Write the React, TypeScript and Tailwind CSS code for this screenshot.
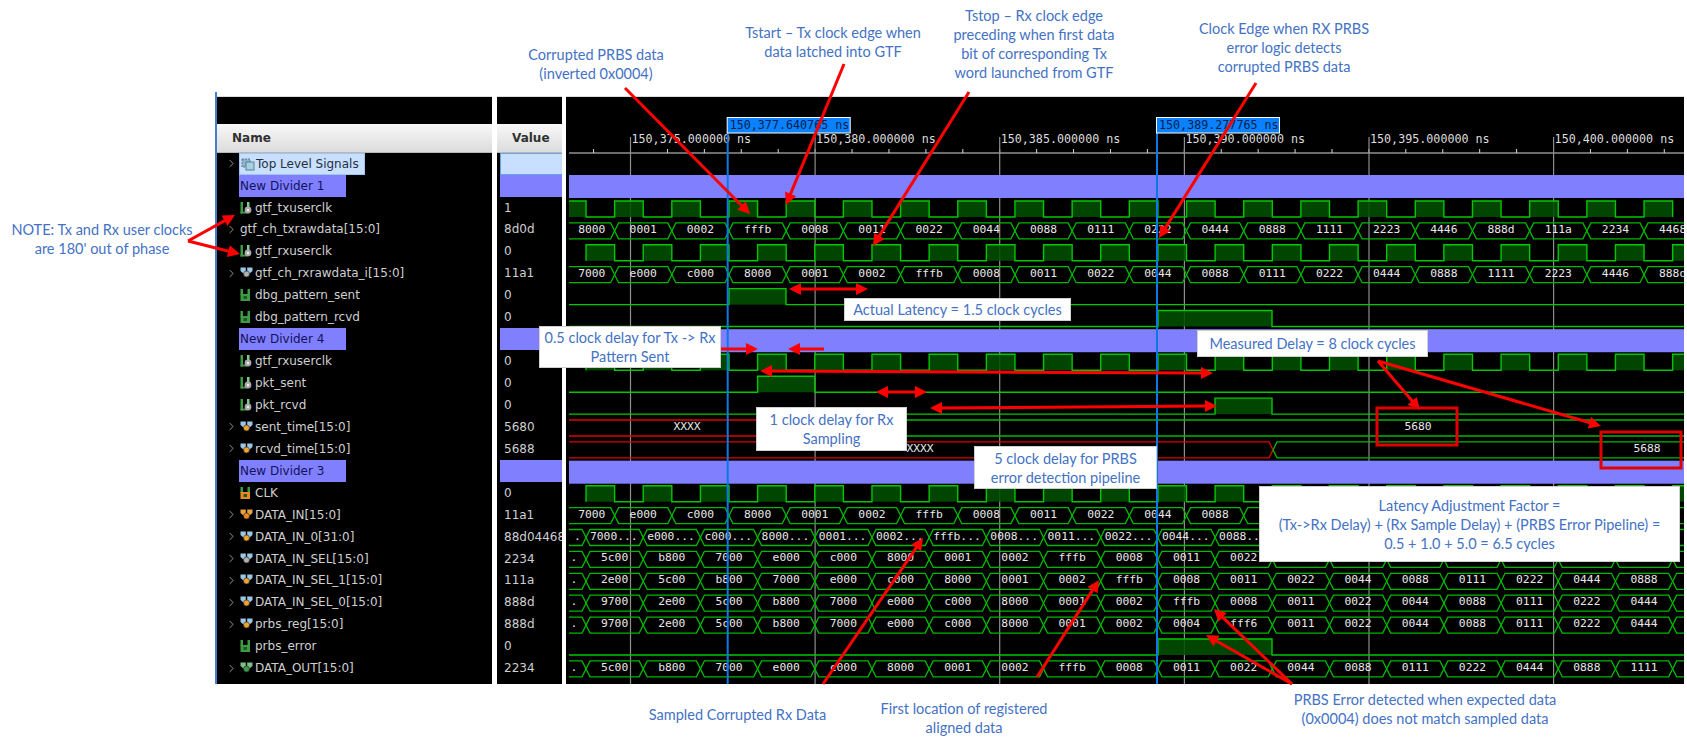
import React from "react";
import { ChevronRight } from "lucide-react";

const P = 57.19;
const T0 = 729;
const L = 569;
const R = 1684;
const rowY = (i: number) => 201 + (i - 2) * 21.9;
const GREEN = "#00c800";
const MONO = "'DejaVu Sans Mono', monospace";

type Ic = { k: "s" | "b" | "g"; top?: string; dot?: string } | null;
type Row = { n: string; v: string; exp?: boolean; ic?: Ic; div?: boolean; group?: boolean };

const S = (dot = "#a8a8a8", top = "#3f9a45"): Ic => ({ k: "s", dot, top });
const G = (bottom = "#3f9a45"): Ic => ({ k: "g", dot: bottom, top: "#3f9a45" });
const B = (dot = "#f2a230", top = "#9cc8e6"): Ic => ({ k: "b", dot, top });

const rows: Row[] = [
  { n: "Top Level Signals", v: "", exp: true, group: true },
  { n: "New Divider 1", v: "", div: true },
  { n: "gtf_txuserclk", v: "1", ic: S() },
  { n: "gtf_ch_txrawdata[15:0]", v: "8d0d", exp: true },
  { n: "gtf_rxuserclk", v: "0", ic: S() },
  { n: "gtf_ch_rxrawdata_i[15:0]", v: "11a1", exp: true, ic: B("#b0b0b0") },
  { n: "dbg_pattern_sent", v: "0", ic: G() },
  { n: "dbg_pattern_rcvd", v: "0", ic: G() },
  { n: "New Divider 4", v: "", div: true },
  { n: "gtf_rxuserclk", v: "0", ic: S() },
  { n: "pkt_sent", v: "0", ic: S() },
  { n: "pkt_rcvd", v: "0", ic: S() },
  { n: "sent_time[15:0]", v: "5680", exp: true, ic: B() },
  { n: "rcvd_time[15:0]", v: "5688", exp: true, ic: B() },
  { n: "New Divider 3", v: "", div: true },
  { n: "CLK", v: "0", ic: G("#e88a20") },
  { n: "DATA_IN[15:0]", v: "11a1", exp: true, ic: B("#e88a20", "#e8a040") },
  { n: "DATA_IN_0[31:0]", v: "88d04468", exp: true, ic: B() },
  { n: "DATA_IN_SEL[15:0]", v: "2234", exp: true, ic: B("#b0b0b0") },
  { n: "DATA_IN_SEL_1[15:0]", v: "111a", exp: true, ic: B() },
  { n: "DATA_IN_SEL_0[15:0]", v: "888d", exp: true, ic: B() },
  { n: "prbs_reg[15:0]", v: "888d", exp: true, ic: B() },
  { n: "prbs_error", v: "0", ic: G() },
  { n: "DATA_OUT[15:0]", v: "2234", exp: true, ic: B("#3f9a45", "#7fc08a") },
];

function SigIcon({ ic }: { ic: Ic }) {
  if (!ic) return null;
  if (ic.k === "s") {
    return (
      <svg width="13" height="14" viewBox="0 0 13 14" className="shrink-0">
        <rect x="0.5" y="1" width="2.5" height="11.5" fill={ic.top} />
        <rect x="0.5" y="10.5" width="7" height="2" fill={ic.top} />
        <rect x="7" y="1" width="2.5" height="5" fill="#7fc98a" />
        <circle cx="8" cy="9" r="3.4" fill={ic.dot} />
        <circle cx="8" cy="9" r="1.2" fill="#f0f0f0" />
      </svg>
    );
  }
  if (ic.k === "g") {
    return (
      <svg width="13" height="14" viewBox="0 0 13 14" className="shrink-0">
        <rect x="0.5" y="1" width="2.5" height="6" fill={ic.top} />
        <rect x="7.5" y="1" width="2.5" height="6" fill={ic.top} />
        <rect x="0.5" y="6" width="9.5" height="7" fill={ic.dot} />
        <rect x="3.5" y="8" width="3.5" height="3" fill="#1f5a25" />
      </svg>
    );
  }
  return (
    <svg width="13" height="14" viewBox="0 0 13 14" className="shrink-0">
      <path d="M0.5 1.5h5.3v4.5L4 8 0.5 5z" fill={ic.top} />
      <path d="M12.5 1.5H7.2V6L9 8l3.5-3z" fill={ic.top} />
      <circle cx="6.5" cy="8" r="3" fill={ic.dot} stroke="#222" strokeWidth="0.6" />
    </svg>
  );
}

function GroupIcon() {
  return (
    <svg width="14" height="14" viewBox="0 0 14 14" className="shrink-0">
      <rect x="1" y="2" width="8" height="8" fill="#8fb4c8" stroke="#5a7f95" strokeDasharray="2 1" />
      <rect x="5" y="5" width="8" height="8" fill="#a8d0e0" stroke="#5a7f95" />
    </svg>
  );
}

function Clock({ i, phase }: { i: number; phase: number }) {
  const hi = rowY(i);
  const lo = hi + 16;
  let d = "";
  const fills: React.ReactNode[] = [];
  let start = phase;
  while (start > L) start -= P;
  let x = start;
  let first = true;
  while (x < R) {
    const a = Math.max(x, L);
    const b = Math.min(x + P / 2, R);
    if (b > L) {
      fills.push(<rect key={x} x={a} y={hi} width={b - a} height={16} fill="#005000" fillOpacity="0.88" />);
      d += `${first ? "M" : "L"}${a} ${x >= L ? lo : hi}L${a} ${hi}L${b} ${hi}L${b} ${b < R ? lo : hi}`;
      first = false;
    }
    x += P;
  }
  return (
    <g>
      {fills}
      <path d={d} fill="none" stroke={GREEN} strokeWidth="1.4" />
    </g>
  );
}

function Pulse({ i, a, b }: { i: number; a: number; b: number }) {
  const hi = rowY(i);
  const lo = hi + 16;
  return (
    <g>
      <rect x={a} y={hi} width={b - a} height={16} fill="#005000" fillOpacity="0.88" />
      <path d={`M${L} ${lo}H${a}V${hi}H${b}V${lo}H${R}`} fill="none" stroke={GREEN} strokeWidth="1.4" />
    </g>
  );
}

function Bus({
  i,
  phase,
  vals,
  left,
  color = "#00b800",
}: {
  i: number;
  phase: number;
  vals: string[];
  left?: boolean;
  color?: string;
}) {
  const top = rowY(i);
  const bot = top + 16;
  let x = phase;
  while (x - P > L) x -= P;
  const edges: number[] = [];
  let e = x;
  while (e < R + P) {
    edges.push(e);
    e += P;
  }
  const path = (s: number, o: number) => {
    let d = `M${L} ${s}`;
    let cur = s;
    edges.forEach((t) => {
      if (t < R + 4) {
        d += `L${t - 4} ${cur}`;
        cur = cur === s ? o : s;
        d += `L${t + 4} ${cur}`;
      }
    });
    d += `L${R} ${cur}`;
    return d;
  };
  const items: React.ReactNode[] = [];
  vals.forEach((v, k) => {
    const a = k === 0 ? L : edges[k - 1];
    const b = edges[k];
    if (a === undefined || a > R) return;
    const isDot = v === ".";
    items.push(
      <text
        key={k}
        x={isDot ? a + 5 : left ? a + 4 : (a + (b ?? R)) / 2}
        y={top + 10}
        textAnchor={left ? "start" : "middle"}
        fontFamily={MONO}
        fontSize="11.3"
        fill="#e8e8e8"
      >
        {v}
      </text>
    );
  });
  return (
    <g>
      <path d={path(top, bot)} fill="none" stroke={color} strokeWidth="1.3" />
      <path d={path(bot, top)} fill="none" stroke={color} strokeWidth="1.3" />
      {items}
    </g>
  );
}

function XBus({ i, t, xText, val, valX }: { i: number; t: number; xText: number; val: string; valX: number }) {
  const top = rowY(i);
  const bot = top + 16;
  return (
    <g>
      <path d={`M${L} ${top}H${t - 4}L${t} ${top + 8}L${t - 4} ${bot}H${L}`} fill="none" stroke="#e00000" strokeWidth="1.3" />
      <path d={`M${R} ${top}H${t + 4}L${t} ${top + 8}L${t + 4} ${bot}H${R}`} fill="none" stroke="#00b800" strokeWidth="1.3" />
      <text x={xText} y={top + 10} textAnchor="middle" fontFamily={MONO} fontSize="11.3" fill="#e8e8e8">
        XXXX
      </text>
      <text x={valX} y={top + 10} textAnchor="middle" fontFamily={MONO} fontSize="11.3" fill="#e8e8e8">
        {val}
      </text>
    </g>
  );
}

const MAJOR = [630.5, 815.1, 999.7, 1184.4, 1369, 1553.6];
const MAJOR_LABEL = ["150,375", "150,380", "150,385", "150,390", "150,395", "150,400"];
const MINOR = Array.from({ length: 32 }, (_, k) => 593.6 + k * 36.92);

function Cursor({ x, w, label }: { x: number; w: number; label: string }) {
  return (
    <g>
      <line x1={x} x2={x} y1={132} y2={684} stroke="#0a78e6" strokeWidth="2" />
      <rect x={x - 0.5} y={117.5} width={w} height={15.5} fill="#0a82ff" stroke="#ffffff" strokeWidth="1" />
      <text x={x + 2} y={129} fontFamily={MONO} fontSize="11.7" fill="#03204a">
        {label}
      </text>
    </g>
  );
}

function Waves() {
  const phase = T0;
  const rx = T0 + P / 2;
  const band = (y: number, h: number) => <rect x={L} y={y} width={R - L} height={h} fill="#8080ff" />;
  return (
    <svg viewBox="566 97 1118 587" width="1118" height="587" className="block">
      <line x1={L} x2={R} y1={153} y2={153} stroke="#d8d8d8" strokeWidth="1.2" />
      {MINOR.map((x) => (
        <line key={x} x1={x} x2={x} y1={149} y2={153} stroke="#d8d8d8" strokeWidth="1" />
      ))}
      {MAJOR.map((x, k) => (
        <g key={x}>
          <line x1={x} x2={x} y1={137} y2={684} stroke="#8e8e8e" strokeWidth="1.2" />
          <text x={x + 1} y={143} fontFamily={MONO} fontSize="11.7" fill="#dddddd">
            {MAJOR_LABEL[k]}.000000 ns
          </text>
        </g>
      ))}

      <Clock i={2} phase={phase} />
      <Bus
        i={3}
        phase={phase}
        vals={["8000", "0001", "0002", "fffb", "0008", "0011", "0022", "0044", "0088", "0111", "0222", "0444", "0888", "1111", "2223", "4446", "888d", "111a", "2234", "4468"]}
      />
      <Clock i={4} phase={rx} />
      <Bus
        i={5}
        phase={phase}
        vals={["7000", "e000", "c000", "8000", "0001", "0002", "fffb", "0008", "0011", "0022", "0044", "0088", "0111", "0222", "0444", "0888", "1111", "2223", "4446", "888d"]}
      />
      <Pulse i={6} a={729} b={786} />
      <Pulse i={7} a={1158} b={1272} />
      <Clock i={9} phase={rx} />
      <Pulse i={10} a={757.6} b={814.8} />
      <Pulse i={11} a={1215} b={1272} />
      <XBus i={12} t={810} xText={687} val="5680" valX={1418} />
      <XBus i={13} t={1273} xText={920} val="5688" valX={1647} />
      <Clock i={15} phase={rx} />
      <Bus i={16} phase={phase} vals={["7000", "e000", "c000", "8000", "0001", "0002", "fffb", "0008", "0011", "0022", "0044", "0088"]} />
      <Bus
        i={17}
        phase={rx}
        left
        vals={[".", "7000...", "e000...", "c000...", "8000...", "0001...", "0002...", "fffb...", "0008...", "0011...", "0022...", "0044...", "0088..."]}
      />
      <Bus i={18} phase={rx} vals={[".", "5c00", "b800", "7000", "e000", "c000", "8000", "0001", "0002", "fffb", "0008", "0011", "0022"]} />
      <Bus
        i={19}
        phase={rx}
        vals={[".", "2e00", "5c00", "b800", "7000", "e000", "c000", "8000", "0001", "0002", "fffb", "0008", "0011", "0022", "0044", "0088", "0111", "0222", "0444", "0888"]}
      />
      <Bus
        i={20}
        phase={rx}
        vals={[".", "9700", "2e00", "5c00", "b800", "7000", "e000", "c000", "8000", "0001", "0002", "fffb", "0008", "0011", "0022", "0044", "0088", "0111", "0222", "0444"]}
      />
      <Bus
        i={21}
        phase={rx}
        vals={[".", "9700", "2e00", "5c00", "b800", "7000", "e000", "c000", "8000", "0001", "0002", "0004", "fff6", "0011", "0022", "0044", "0088", "0111", "0222", "0444"]}
      />
      <Pulse i={22} a={1158} b={1272} />
      <Bus
        i={23}
        phase={rx}
        vals={[".", "5c00", "b800", "7000", "e000", "c000", "8000", "0001", "0002", "fffb", "0008", "0011", "0022", "0044", "0088", "0111", "0222", "0444", "0888", "1111"]}
      />

      {band(175, 23)}
      {band(329.2, 23)}
      {band(460.7, 23)}

      <Cursor x={727.7} w={123} label="150,377.640765 ns" />
      <Cursor x={1157} w={123} label="150,389.277765 ns" />
    </svg>
  );
}

function Arrow({ x1, y1, x2, y2, both, w = 3 }: { x1: number; y1: number; x2: number; y2: number; both?: boolean; w?: number }) {
  const dx = x2 - x1;
  const dy = y2 - y1;
  const len = Math.hypot(dx, dy);
  const ux = dx / len;
  const uy = dy / len;
  const h = 12;
  const hw = 6;
  const head = (tx: number, ty: number, sx: number, sy: number) => {
    const bx = tx - sx * h;
    const by = ty - sy * h;
    return `${tx},${ty} ${bx - sy * hw},${by + sx * hw} ${bx + sy * hw},${by - sx * hw}`;
  };
  return (
    <g>
      <line
        x1={both ? x1 + ux * h * 0.8 : x1}
        y1={both ? y1 + uy * h * 0.8 : y1}
        x2={x2 - ux * h * 0.8}
        y2={y2 - uy * h * 0.8}
        stroke="#ff0000"
        strokeWidth={w}
      />
      <polygon points={head(x2, y2, ux, uy)} fill="#ff0000" />
      {both && <polygon points={head(x1, y1, -ux, -uy)} fill="#ff0000" />}
    </g>
  );
}

function Overlay() {
  return (
    <svg viewBox="0 0 1687 746" width="1687" height="746" className="absolute left-0 top-0 pointer-events-none">
      <Arrow x1={625} y1={88} x2={750} y2={214} />
      <Arrow x1={844} y1={64} x2={786} y2={205} />
      <Arrow x1={969} y1={92} x2={873} y2={246} />
      <Arrow x1={1256} y1={83} x2={1159} y2={238} />
      <Arrow x1={188} y1={241} x2={235} y2={215} />
      <Arrow x1={188} y1={241} x2={240} y2={254} />
      <Arrow x1={789} y1={289} x2={868} y2={289} both />
      <Arrow x1={716} y1={349} x2={758} y2={349} />
      <Arrow x1={824} y1={349} x2={788} y2={349} />
      <Arrow x1={760} y1={371} x2={1213} y2={373} both />
      <Arrow x1={876} y1={392} x2={927} y2={392} both />
      <Arrow x1={930} y1={408} x2={1217} y2={406} both />
      <Arrow x1={1378} y1={361} x2={1420} y2={410} />
      <Arrow x1={1378} y1={361} x2={1601} y2={426} />
      <rect x="1377" y="408" width="80" height="37" fill="none" stroke="#e00000" strokeWidth="3" />
      <rect x="1601" y="432" width="80" height="36" fill="none" stroke="#e00000" strokeWidth="3" />
      <Arrow x1={823} y1={684} x2={923} y2={538} />
      <Arrow x1={1037} y1={677} x2={1099} y2={580} />
      <Arrow x1={1292} y1={684} x2={1214} y2={609} />
      <Arrow x1={1292} y1={684} x2={1206} y2={635} />
    </svg>
  );
}

const lbl = "absolute text-center whitespace-nowrap font-['Lato',sans-serif] text-[14.5px] leading-[19px] text-[#4472c4]";
const box = "absolute flex items-center justify-center text-center whitespace-nowrap bg-white border border-[#d0d0d0] font-['Lato',sans-serif] text-[14.5px] leading-[19px] text-[#4472c4]";

export default function App() {
  return (
    <div className="relative w-[1687px] h-[746px] overflow-hidden bg-white pt-[96px] pl-[215px]">
      <div className="flex items-start">
        <div className="w-[2px] h-[592px] -mt-[4px] bg-[#4a7ccc]" />

        <div className="w-[275px] h-[588px] bg-black border-t border-[#dddddd] font-['DejaVu_Sans',sans-serif] text-[12px] text-[#cfcfcf]">
          <div className="h-[27px]" />
          <div className="h-[28.7px] flex items-center pl-[15px] bg-linear-to-b from-[#f8f8f8] to-[#dcdcdc] border-b border-[#b8b8b8] font-bold text-[#303030]">
            Name
          </div>
          {rows.map((r, i) => (
            <div key={i} className="h-[21.94px] flex items-center pl-[9px] whitespace-nowrap">
              <div className="w-[13px] shrink-0 flex items-center">
                {r.exp && <ChevronRight size={13} color="#a8a8a8" strokeWidth={1.6} className="-ml-[1px]" />}
              </div>
              {r.div ? (
                <div className="w-[107px] h-[21.9px] flex items-center bg-[#8080ff] text-[#12125c] pl-[1px]">{r.n}</div>
              ) : r.group ? (
                <div className="w-[126px] h-[21.9px] flex items-center gap-[1px] bg-[#c8dfff] border border-[#9fc4f0] text-[#263040] pl-[1px]">
                  <GroupIcon />
                  {r.n}
                </div>
              ) : (
                <>
                  {r.ic && (
                    <div className="w-[16px] pl-[1px] shrink-0 flex items-center">
                      <SigIcon ic={r.ic} />
                    </div>
                  )}
                  <span className={r.ic ? "" : "ml-[1px]"}>{r.n}</span>
                </>
              )}
            </div>
          ))}
        </div>

        <div className="w-[65px] h-[588px] ml-[5px] bg-black border-t border-[#dddddd] overflow-hidden font-['DejaVu_Sans',sans-serif] text-[12px] text-[#cfcfcf]">
          <div className="h-[27px]" />
          <div className="h-[28.7px] flex items-center pl-[15px] bg-linear-to-b from-[#f8f8f8] to-[#dcdcdc] border-b border-[#b8b8b8] font-bold text-[#303030]">
            Value
          </div>
          {rows.map((r, i) => (
            <div key={i} className="h-[21.94px] flex items-center whitespace-nowrap">
              {r.div ? (
                <div className="ml-[3px] w-[62px] h-[21.9px] bg-[#8080ff]" />
              ) : r.group ? (
                <div className="ml-[3px] w-[62px] h-[21.9px] bg-[#c8dfff] border border-[#6aa4e0] border-r-0" />
              ) : (
                <span className="pl-[7px]">{r.v}</span>
              )}
            </div>
          ))}
        </div>

        <div className="w-[1118px] h-[588px] ml-[4px] bg-black border-t border-[#dddddd]">
          <Waves />
        </div>
      </div>

      <div className={`${lbl} left-[496px] w-[200px] top-[45px]`}>
        Corrupted PRBS data
        <br />
        (inverted 0x0004)
      </div>
      <div className={`${lbl} left-[733px] w-[200px] top-[22.5px]`}>
        Tstart – Tx clock edge when
        <br />
        data latched into GTF
      </div>
      <div className={`${lbl} left-[934px] w-[200px] top-[5.5px]`}>
        Tstop – Rx clock edge
        <br />
        preceding when first data
        <br />
        bit of corresponding Tx
        <br />
        word launched from GTF
      </div>
      <div className={`${lbl} left-[1184px] w-[200px] top-[18.5px]`}>
        Clock Edge when RX PRBS
        <br />
        error logic detects
        <br />
        corrupted PRBS data
      </div>
      <div className={`${lbl} left-[2px] w-[200px] top-[220px]`}>
        NOTE: Tx and Rx user clocks
        <br />
        are 180' out of phase
      </div>
      <div className={`${lbl} left-[637.5px] w-[200px] top-[705px]`}>Sampled Corrupted Rx Data</div>
      <div className={`${lbl} left-[864px] w-[200px] top-[699px]`}>
        First location of registered
        <br />
        aligned data
      </div>
      <div className={`${lbl} left-[1275px] w-[300px] top-[689.5px]`}>
        PRBS Error detected when expected data
        <br />
        (0x0004) does not match sampled data
      </div>

      <Overlay />

      <div className={`${box} left-[539px] top-[326px] w-[182px] h-[42px]`}>
        0.5 clock delay for Tx -&gt; Rx
        <br />
        Pattern Sent
      </div>
      <div className={`${box} left-[844px] top-[298px] w-[227px] h-[23px]`}>Actual Latency = 1.5 clock cycles</div>
      <div className={`${box} left-[756px] top-[407px] w-[151px] h-[44px]`}>
        1 clock delay for Rx
        <br />
        Sampling
      </div>
      <div className={`${box} left-[974px] top-[446px] w-[183px] h-[43px]`}>
        5 clock delay for PRBS
        <br />
        error detection pipeline
      </div>
      <div className={`${box} left-[1197px] top-[330px] w-[231px] h-[27px]`}>Measured Delay = 8 clock cycles</div>
      <div className={`${box} left-[1259px] top-[486px] w-[421px] h-[76px]`}>
        Latency Adjustment Factor =
        <br />
        (Tx-&gt;Rx Delay) + (Rx Sample Delay) + (PRBS Error Pipeline) =
        <br />
        0.5 + 1.0 + 5.0 = 6.5 cycles
      </div>
    </div>
  );
}
